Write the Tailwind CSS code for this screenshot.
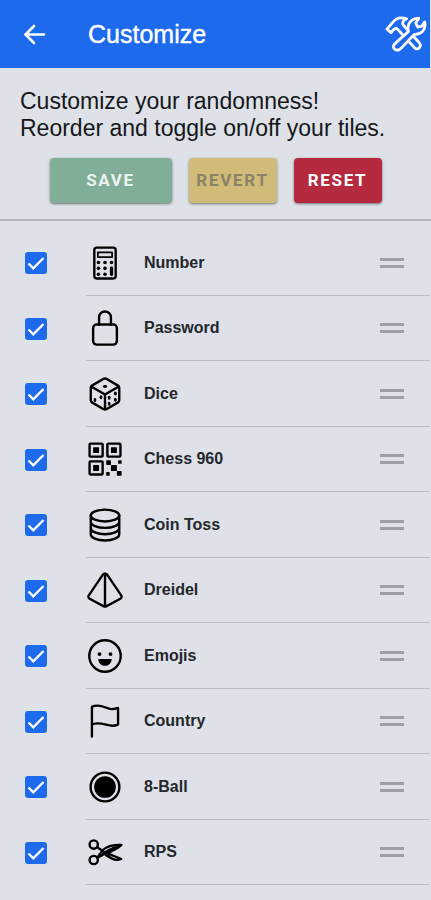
<!DOCTYPE html>
<html lang="en">
<head>
<meta charset="utf-8">
<meta name="viewport" content="width=device-width, initial-scale=1">
<title>Customize</title>
<script src="https://cdn.jsdelivr.net/npm/@tailwindcss/browser@4"></script>
</head>
<body class="bg-[#dee1e7] font-['Liberation_Sans',Arial,sans-serif] text-[#15171a]">
<header class="mr-px flex h-[68px] items-center bg-[#1d6aec] pl-[22px] pr-[3px] text-white">
  <button type="button" aria-label="Back" class="flex size-6 items-center justify-center">
    <svg class="size-6" viewBox="0 0 24 24" fill="none" stroke="currentColor" stroke-width="2.6" stroke-linecap="round"><path d="M12 4 3.500 12.500 12 21M4 12.500h18" stroke-linejoin="miter"/></svg>
  </button>
  <h1 class="ml-[42px] flex-1 text-[25px] leading-8 [-webkit-text-stroke:0.4px_currentColor]">Customize</h1>
  <button type="button" aria-label="Tools" class="shrink-0">
    <svg class="h-9 w-[42px]" viewBox="0 0 120 104" fill="#1d6aec" stroke="currentColor" stroke-width="8" stroke-linejoin="round" stroke-linecap="round">
      <path d="M5 38 21 19C31 6 47 3 62 8 52 12 48 19 52 26L99 78c8 10-6 23-14 14L39 42l-7-7-8 4-7 9z"/>
      <path d="M26 82 67 45C61 24 75 6 97 7L88 20l6 12 12-3 8-12c5 21-10 38-30 36L44 95c-12 9-26-3-18-13z"/>
    </svg>
  </button>
</header>
<main>
  <section class="border-b-2 border-[#b4b8be] pt-5 pb-4">
    <p class="px-5 text-[23px] leading-[27px]">Customize your randomness!<br>Reorder and toggle on/off your tiles.</p>
    <div class="mt-4 flex justify-center gap-[17px] font-['Roboto',sans-serif] text-[17px] font-bold tracking-widest">
      <button type="button" class="h-[45px] w-[122px] rounded bg-[#81ae96] text-[#edf3f0] shadow-sm shadow-black/40">SAVE</button>
      <button type="button" class="h-[45px] w-[88px] rounded bg-[#d0bc78] text-[#8a8168] shadow-sm shadow-black/40">REVERT</button>
      <button type="button" class="h-[45px] w-[88px] rounded bg-[#b52a3f] text-white shadow-sm shadow-black/40">RESET</button>
    </div>
  </section>
  <ul id="tiles" class="mr-px pt-[9px]"></ul>
</main>
<template id="row">
  <li class="flex items-stretch pl-[25px] odd:h-[66px] even:h-[65px]">
    <span class="grid w-[61px] items-center">
      <input type="checkbox" checked class="peer col-start-1 row-start-1 size-[22px] appearance-none rounded-[3px] border-2 border-[#1d6aec] checked:bg-[#1d6aec]">
      <svg class="pointer-events-none invisible col-start-1 row-start-1 size-[22px] peer-checked:visible" viewBox="0 0 22 22" fill="none" stroke="white" stroke-width="2.400"><path d="m3.500 11.500 4.800 4.800L18.500 6"/></svg>
    </span>
    <div class="flex flex-1 items-center border-b border-[#bbbec4] pr-[26px]">
      <svg class="size-[38px] text-black" viewBox="0 0 512 512" fill="none" stroke="currentColor" stroke-width="32" stroke-linejoin="round" stroke-linecap="round" aria-hidden="true"></svg>
      <label class="ml-5 flex-1 text-base font-bold text-[#24272c]"></label>
      <button type="button" class="flex w-6 flex-col gap-1"><span class="h-[3px] bg-[#9c9fa5]"></span><span class="h-[3px] bg-[#9c9fa5]"></span></button>
    </div>
  </li>
</template>
<script>
const tiles = [
  ['Number', '<rect x="112" y="48" width="288" height="416" rx="32"/><rect x="160" y="112" width="192" height="64" stroke-width="24"/><g fill="currentColor" stroke="none"><circle cx="168" cy="248" r="24"/><circle cx="256" cy="248" r="24"/><circle cx="344" cy="248" r="24"/><circle cx="168" cy="328" r="24"/><circle cx="256" cy="328" r="24"/><circle cx="168" cy="408" r="24"/><circle cx="256" cy="408" r="24"/><rect x="322" y="304" width="44" height="128" rx="20"/></g>'],
  ['Password', '<path d="M336 208v-95a80 80 0 0 0-160 0v95"/><rect x="96" y="208" width="320" height="272" rx="48"/>'],
  ['Dice', '<path d="M448 341.370V170.610A32 32 0 0 0 432.110 143l-152-88.460a47.940 47.940 0 0 0-48.240 0L79.890 143A32 32 0 0 0 64 170.610v170.760A32 32 0 0 0 79.890 369l152 88.460a48 48 0 0 0 48.240 0l152-88.460A32 32 0 0 0 448 341.370zM69 154l187 110 187-110M256 464V264"/><g fill="currentColor" stroke="none"><ellipse cx="256" cy="154" rx="28" ry="20"/><ellipse cx="121" cy="336" rx="19" ry="27"/><ellipse cx="202" cy="299" rx="19" ry="27"/><ellipse cx="312" cy="307" rx="19" ry="27"/><ellipse cx="396" cy="250" rx="19" ry="27"/><ellipse cx="396" cy="334" rx="19" ry="27"/><ellipse cx="312" cy="388" rx="19" ry="27"/></g>'],
  ['Chess 960', '<rect x="48" y="48" width="176" height="176" rx="12"/><rect x="288" y="48" width="176" height="176" rx="12"/><rect x="48" y="288" width="176" height="176" rx="12"/><g fill="currentColor" stroke="none"><rect x="96" y="96" width="80" height="80" rx="8"/><rect x="336" y="96" width="80" height="80" rx="8"/><rect x="96" y="336" width="80" height="80" rx="8"/><rect x="336" y="336" width="80" height="80" rx="8"/><rect x="272" y="272" width="64" height="64" rx="8"/><rect x="416" y="416" width="64" height="64" rx="8"/><rect x="432" y="272" width="48" height="48" rx="8"/><rect x="272" y="432" width="48" height="48" rx="8"/></g>'],
  ['Coin Toss', '<ellipse cx="256" cy="128" rx="192" ry="80"/><path d="M64 128v256c0 44 86 80 192 80s192-36 192-80V128M64 214c0 44 86 80 192 80s192-36 192-80M64 300c0 44 86 80 192 80s192-36 192-80"/>'],
  ['Dreidel', '<path d="M229.730 45.880 37.530 327.790a31.790 31.790 0 0 0 11.310 46L241 476.260a31.770 31.770 0 0 0 29.920 0l192.200-102.510a31.790 31.790 0 0 0 11.310-46L282.270 45.880a31.800 31.800 0 0 0-52.540 0zM256 32v448"/>'],
  ['Emojis', '<circle cx="256" cy="256" r="212"/><g fill="currentColor" stroke="none"><circle cx="182" cy="230" r="26"/><circle cx="330" cy="230" r="26"/><path d="M176 298h160c8 0 12 6 10 14-10 46-46 76-90 76s-80-30-90-76c-2-8 2-14 10-14z"/></g>'],
  ['Country', '<path stroke-miterlimit="10" d="M80 464V68.140a8 8 0 0 1 4-6.900C91.810 56.660 112.920 48 160 48c64 0 145 48 192 48a199.530 199.530 0 0 0 77.230-15.770 2 2 0 0 1 2.770 1.850v219.360a4 4 0 0 1-2.390 3.650C421.370 308.700 392.330 320 352 320c-48 0-128-32-192-32s-80 16-80 16"/>'],
  ['8-Ball', '<circle cx="256" cy="256" r="194"/><circle cx="256" cy="256" r="146" fill="currentColor" stroke="none"/>'],
  ['RPS', '<circle cx="104" cy="156" r="56"/><circle cx="104" cy="364" r="56"/><path d="m150 190 70 50M151 332l58-78c34-46 78-68 126-80 50-12 98-14 142-12-34 36-84 58-132 82-54 26-110 40-152 68z"/><path fill="currentColor" stroke-width="18" d="M224 282c60-60 130-82 226-110-70 52-146 70-226 110z"/><path d="m306 280 168 70c-40 16-84 16-120-4l-84-48"/><circle cx="244" cy="262" r="8"/>']
];
const list = document.getElementById('tiles');
const template = document.getElementById('row');
tiles.forEach(([name, art], i) => {
  const row = template.content.cloneNode(true);
  row.querySelector('input').id = 'tile-' + i;
  const label = row.querySelector('label');
  label.htmlFor = 'tile-' + i;
  label.textContent = name;
  row.querySelectorAll('svg')[1].innerHTML = art;
  row.querySelector('button').setAttribute('aria-label', 'Reorder ' + name);
  list.append(row);
});
</script>
</body>
</html>
